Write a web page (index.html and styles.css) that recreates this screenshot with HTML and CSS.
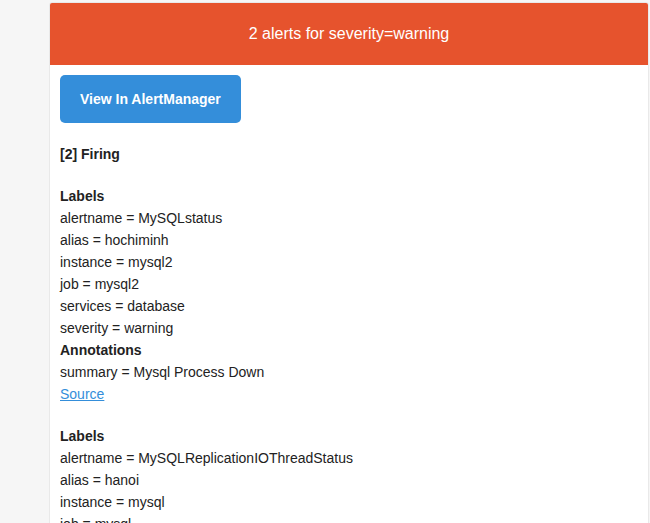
FILE: index.html
```html
<!DOCTYPE html>
<html>
<head>
<meta charset="utf-8">
<link rel="stylesheet" href="styles.css">
</head>
<body>
<div class="page">
  <div class="card">
    <div class="header">2 alerts for severity=warning</div>
    <div class="content">
      <div class="block"><a class="btn" href="#">View In AlertManager</a></div>
      <div class="block"><strong>[2] Firing</strong></div>
      <div class="block">
        <strong>Labels</strong><br>
        alertname = MySQLstatus<br>
        alias = hochiminh<br>
        instance = mysql2<br>
        job = mysql2<br>
        services = database<br>
        severity = warning<br>
        <strong>Annotations</strong><br>
        summary = Mysql Process Down<br>
        <a class="link" href="#">Source</a><br>
      </div>
      <div class="block">
        <strong>Labels</strong><br>
        alertname = MySQLReplicationIOThreadStatus<br>
        alias = hanoi<br>
        instance = mysql<br>
        job = mysql<br>
        services = database<br>
        severity = warning<br>
      </div>
    </div>
  </div>
</div>
</body>
</html>
```
FILE: styles.css
```css
html, body {
  margin: 0;
  padding: 0;
  background: #f6f6f6;
  font-family: "Liberation Sans", Arial, sans-serif;
  font-size: 14px;
  line-height: 22px;
  color: #222;
  overflow: hidden;
}
.page {
  padding-top: 2px;
  padding-left: 49px;
}
.card {
  width: 598px;
  background: #fff;
  border: 1px solid #e9e9e9;
  border-radius: 3px;
  overflow: hidden;
}
.header {
  background: #e6532d;
  color: #fff;
  font-size: 16px;
  line-height: 22px;
  padding: 20px;
  text-align: center;
}
.content {
  padding: 10px;
}
.block {
  padding-bottom: 20px;
}
.btn {
  display: inline-block;
  vertical-align: top;
  background: #348eda;
  color: #fff;
  font-weight: bold;
  text-decoration: none;
  line-height: 28px;
  padding: 10px 20px;
  border-radius: 5px;
}
.link {
  color: #348eda;
  text-decoration: underline;
}
strong {
  font-weight: bold;
}
```
